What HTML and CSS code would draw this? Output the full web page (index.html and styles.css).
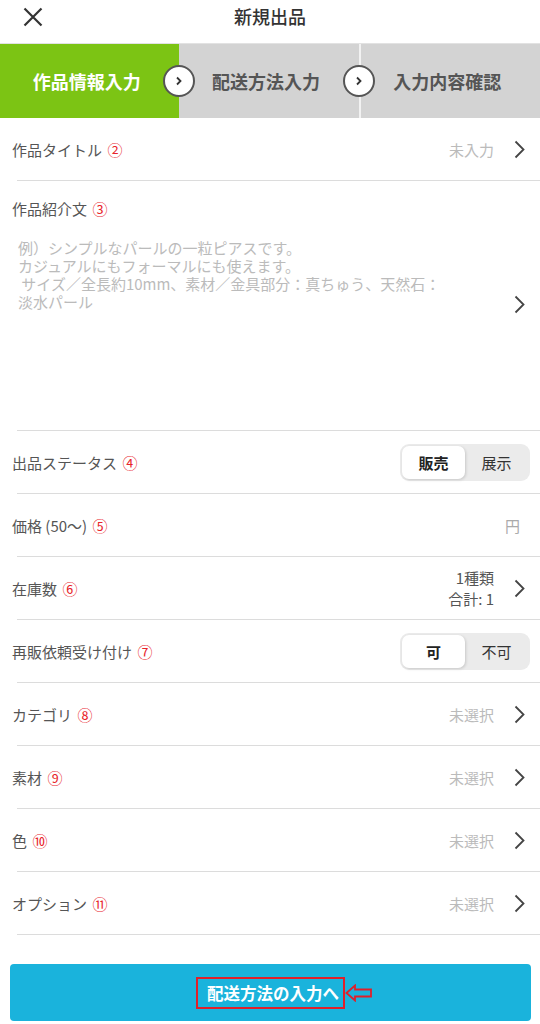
FILE: index.html
```html
<!DOCTYPE html>
<html lang="ja">
<head>
    <meta charset="UTF-8">
    <meta name="viewport" content="width=device-width, initial-scale=1.0">
    <title>新規出品</title>
    <link rel="stylesheet" href="styles.css">
</head>
<body>
    <header class="top-bar">
        <button class="close-btn" aria-label="閉じる">
            <svg width="20" height="20" viewBox="0 0 20 20"><path d="M1.5 1.5 L18.5 18.5 M18.5 1.5 L1.5 18.5" stroke="#333" stroke-width="2.2" fill="none"/></svg>
        </button>
        <h1 class="page-title">新規出品</h1>
    </header>

    <nav class="steps">
        <div class="step active">
            <span>作品情報入力</span>
            <i class="step-arrow"><svg width="8" height="10" viewBox="0 0 8 10"><polyline points="2,1.5 5.5,5 2,8.5" stroke="#333" stroke-width="1.8" fill="none"/></svg></i>
        </div>
        <div class="step">
            <span>配送方法入力</span>
            <i class="step-arrow"><svg width="8" height="10" viewBox="0 0 8 10"><polyline points="2,1.5 5.5,5 2,8.5" stroke="#333" stroke-width="1.8" fill="none"/></svg></i>
        </div>
        <div class="step">
            <span>入力内容確認</span>
        </div>
    </nav>

    <main class="form-list">
        <div class="row">
            <span class="label">作品タイトル <em class="num">②</em></span>
            <span class="value muted">未入力</span>
            <svg class="chevron" width="11" height="19" viewBox="0 0 11 19"><polyline points="1.5,1.5 9.5,9.5 1.5,17.5" stroke="#444" stroke-width="1.8" fill="none"/></svg>
        </div>

        <div class="row desc-row">
            <span class="label">作品紹介文 <em class="num">③</em></span>
            <div class="desc-body">
                <p class="placeholder">例）シンプルなパールの一粒ピアスです。<br>カジュアルにもフォーマルにも使えます。<br>&nbsp;サイズ／全長約10mm、素材／金具部分：真ちゅう、天然石：<br>淡水パール</p>
                <svg class="chevron" width="11" height="19" viewBox="0 0 11 19"><polyline points="1.5,1.5 9.5,9.5 1.5,17.5" stroke="#444" stroke-width="1.8" fill="none"/></svg>
            </div>
        </div>

        <div class="row">
            <span class="label">出品ステータス <em class="num">④</em></span>
            <div class="toggle">
                <span class="opt on">販売</span>
                <span class="opt">展示</span>
            </div>
        </div>

        <div class="row">
            <span class="label">価格 (50～) <em class="num">⑤</em></span>
            <span class="value muted yen">円</span>
        </div>

        <div class="row">
            <span class="label">在庫数 <em class="num">⑥</em></span>
            <span class="value stock">1種類<br>合計: 1</span>
            <svg class="chevron" width="11" height="19" viewBox="0 0 11 19"><polyline points="1.5,1.5 9.5,9.5 1.5,17.5" stroke="#444" stroke-width="1.8" fill="none"/></svg>
        </div>

        <div class="row">
            <span class="label">再販依頼受け付け <em class="num">⑦</em></span>
            <div class="toggle">
                <span class="opt on">可</span>
                <span class="opt">不可</span>
            </div>
        </div>

        <div class="row">
            <span class="label">カテゴリ <em class="num">⑧</em></span>
            <span class="value muted">未選択</span>
            <svg class="chevron" width="11" height="19" viewBox="0 0 11 19"><polyline points="1.5,1.5 9.5,9.5 1.5,17.5" stroke="#444" stroke-width="1.8" fill="none"/></svg>
        </div>

        <div class="row">
            <span class="label">素材 <em class="num">⑨</em></span>
            <span class="value muted">未選択</span>
            <svg class="chevron" width="11" height="19" viewBox="0 0 11 19"><polyline points="1.5,1.5 9.5,9.5 1.5,17.5" stroke="#444" stroke-width="1.8" fill="none"/></svg>
        </div>

        <div class="row">
            <span class="label">色 <em class="num">⑩</em></span>
            <span class="value muted">未選択</span>
            <svg class="chevron" width="11" height="19" viewBox="0 0 11 19"><polyline points="1.5,1.5 9.5,9.5 1.5,17.5" stroke="#444" stroke-width="1.8" fill="none"/></svg>
        </div>

        <div class="row">
            <span class="label">オプション <em class="num">⑪</em></span>
            <span class="value muted">未選択</span>
            <svg class="chevron" width="11" height="19" viewBox="0 0 11 19"><polyline points="1.5,1.5 9.5,9.5 1.5,17.5" stroke="#444" stroke-width="1.8" fill="none"/></svg>
        </div>
    </main>

    <div class="footer-bar">
        <button class="next-btn">
            <span class="next-text">配送方法の入力へ
                <svg class="hint-arrow" width="28" height="18" viewBox="0 0 28 18"><path d="M1.5 9 L10 1.5 L10 5.5 L26 5.5 L26 12.5 L10 12.5 L10 16.5 Z" stroke="#e0202a" stroke-width="1.8" fill="none"/></svg>
            </span>
        </button>
    </div>
</body>
</html>
```

FILE: styles.css
```css
body {
    font-family: "Noto Sans CJK JP", "Noto Sans", sans-serif;
    margin: 0;
    padding: 0;
    background-color: #fff;
    color: #555;
}

.top-bar {
    height: 43px;
    display: flex;
    align-items: center;
    justify-content: center;
    position: relative;
}

.close-btn {
    position: absolute;
    left: 22px;
    top: 6px;
    border: none;
    background: none;
    padding: 0;
    width: 22px;
    height: 22px;
    display: flex;
    align-items: center;
    justify-content: center;
}

.page-title {
    margin: 0;
    font-size: 18px;
    font-weight: 500;
    color: #333;
    margin-top: -11px;
}

.steps {
    display: flex;
    height: 74px;
    border-top: 1px solid #e2e2e2;
    background-color: #d3d3d3;
}

.step {
    flex: 1;
    position: relative;
    display: flex;
    align-items: center;
    justify-content: center;
    padding-right: 6px;
    font-size: 18px;
    font-weight: bold;
    color: #555;
    border-right: 2px solid #f2f2f2;
}

.step:last-child {
    border-right: none;
}

.step.active {
    background-color: #7cc414;
    color: #fff;
    border-right: none;
}

.step-arrow {
    position: absolute;
    right: -16px;
    top: 50%;
    margin-top: -16px;
    width: 28px;
    height: 28px;
    border-radius: 50%;
    background-color: #fff;
    border: 2px solid #555;
    display: flex;
    align-items: center;
    justify-content: center;
    z-index: 1;
}

.row {
    display: flex;
    align-items: center;
    min-height: 62px;
    padding: 0 15px 1px 12px;
    background: linear-gradient(#dcdcdc, #dcdcdc) no-repeat 17px 100% / calc(100% - 17px) 1px;
    font-size: 15px;
}

.label {
    flex: 1;
    color: #555;
}

.num {
    font-style: normal;
    color: #e8232a;
    margin-left: 2px;
}

.value {
    margin-right: 20px;
}

.muted {
    color: #bbb;
}

.yen {
    color: #aaa;
    margin-right: 5px;
}

.stock {
    text-align: right;
    line-height: 21px;
    color: #555;
    margin-right: 20px;
}

.chevron {
    display: block;
}

.desc-row {
    flex-direction: column;
    align-items: stretch;
    min-height: 250px;
    padding-top: 17px;
    box-sizing: border-box;
}

.desc-row .label {
    flex: none;
}

.desc-body {
    display: flex;
    align-items: flex-start;
}

.placeholder {
    flex: 1;
    margin: 20px 20px 0 6px;
    font-size: 15px;
    line-height: 18px;
    color: #bbb;
}

.desc-body .chevron {
    margin-top: 76px;
}

.toggle {
    display: flex;
    width: 130px;
    height: 37px;
    padding: 2px;
    box-sizing: border-box;
    background-color: #ebebeb;
    border-radius: 9px;
    margin-right: -5px;
}

.opt {
    flex: 1;
    display: flex;
    align-items: center;
    justify-content: center;
    color: #333;
    font-size: 15px;
}

.opt.on {
    background-color: #fff;
    border-radius: 7px;
    font-weight: bold;
    color: #222;
    box-shadow: 1px 1px 3px rgba(0, 0, 0, 0.15);
}

.footer-bar {
    padding: 29px 9px 0 10px;
}

.next-btn {
    width: 100%;
    height: 57px;
    border: none;
    border-radius: 4px;
    background-color: #1ab3dc;
    display: flex;
    align-items: center;
    justify-content: center;
    font-family: inherit;
}

.next-text {
    position: relative;
    color: #fff;
    font-size: 16.5px;
    font-weight: bold;
    padding: 2px 4px 2px 9px;
    border: 2px solid #e0202a;
    line-height: 24px;
}

.hint-arrow {
    position: absolute;
    left: 100%;
    top: 50%;
    margin: -9px 0 0 2px;
}
```
